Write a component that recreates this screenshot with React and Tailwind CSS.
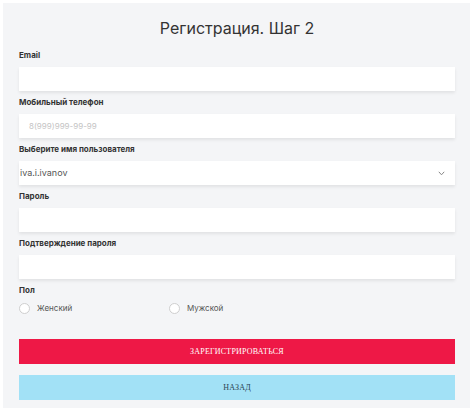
import React from "react";

function Field({ label, children, first }) {
  return (
    <div className={first ? "flex flex-col" : "flex flex-col mt-[6px]"}>
      <div className="text-[8px] leading-[10px] font-bold text-[#333] mb-[7px]">{label}</div>
      {children}
    </div>
  );
}

function Input({ placeholder }) {
  return (
    <div className="h-6 bg-white shadow-[0_2px_3px_rgba(0,0,0,0.08)] flex items-center px-[10px]">
      {placeholder ? (
        <span className="text-[8px] text-[#c4c4c4]">{placeholder}</span>
      ) : null}
    </div>
  );
}

function Radio({ label }) {
  return (
    <div className="flex items-center">
      <span className="w-[11px] h-[11px] rounded-full border border-[#cfcfcf] bg-white"></span>
      <span className="ml-[7px] text-[8px] text-[#555]">{label}</span>
    </div>
  );
}

export default function App() {
  return (
    <div className="w-[474px] h-[412px] bg-white pt-[3px] pl-[3px]" style={{ fontFamily: "Inter, 'Noto Sans', sans-serif" }}>
      <div className="w-[467px] h-[405px] bg-[#f4f5f7] pt-[13px] pl-[16px] pr-[15px] flex flex-col">
        <h1 className="text-[16px] leading-[24px] text-center text-[#333] font-normal mb-[10px]">
          Регистрация. Шаг 2
        </h1>
        <Field label="Email" first>
          <Input />
        </Field>
        <Field label="Мобильный телефон">
          <Input placeholder="8(999)999-99-99" />
        </Field>
        <Field label="Выберите имя пользователя">
          <div className="h-6 bg-white shadow-[0_2px_3px_rgba(0,0,0,0.08)] flex items-center justify-between pl-[1px] pr-[10px]">
            <span className="text-[9px] text-[#555]">iva.i.ivanov</span>
            <svg width="7" height="5" viewBox="0 0 7 5" fill="none">
              <path d="M0.8 0.8 L3.5 3.8 L6.2 0.8" stroke="#888" strokeWidth="1" />
            </svg>
          </div>
        </Field>
        <Field label="Пароль">
          <Input />
        </Field>
        <Field label="Подтверждение пароля">
          <Input />
        </Field>
        <div className="mt-[6px] text-[8px] leading-[10px] font-bold text-[#333]">Пол</div>
        <div className="mt-[7px] flex">
          <div className="w-[150px]">
            <Radio label="Женский" />
          </div>
          <Radio label="Мужской" />
        </div>
        <button
          className="mt-[25px] h-[25px] bg-[#ee1846] text-white text-[8px] uppercase tracking-[0.2px]"
          style={{ fontFamily: "'Liberation Serif', serif" }}
        >
          Зарегистрироваться
        </button>
        <button
          className="mt-[11px] h-[25px] bg-[#a2e1f6] text-[#2c4452] text-[8px] uppercase tracking-[0.2px]"
          style={{ fontFamily: "'Liberation Serif', serif" }}
        >
          Назад
        </button>
      </div>
    </div>
  );
}
